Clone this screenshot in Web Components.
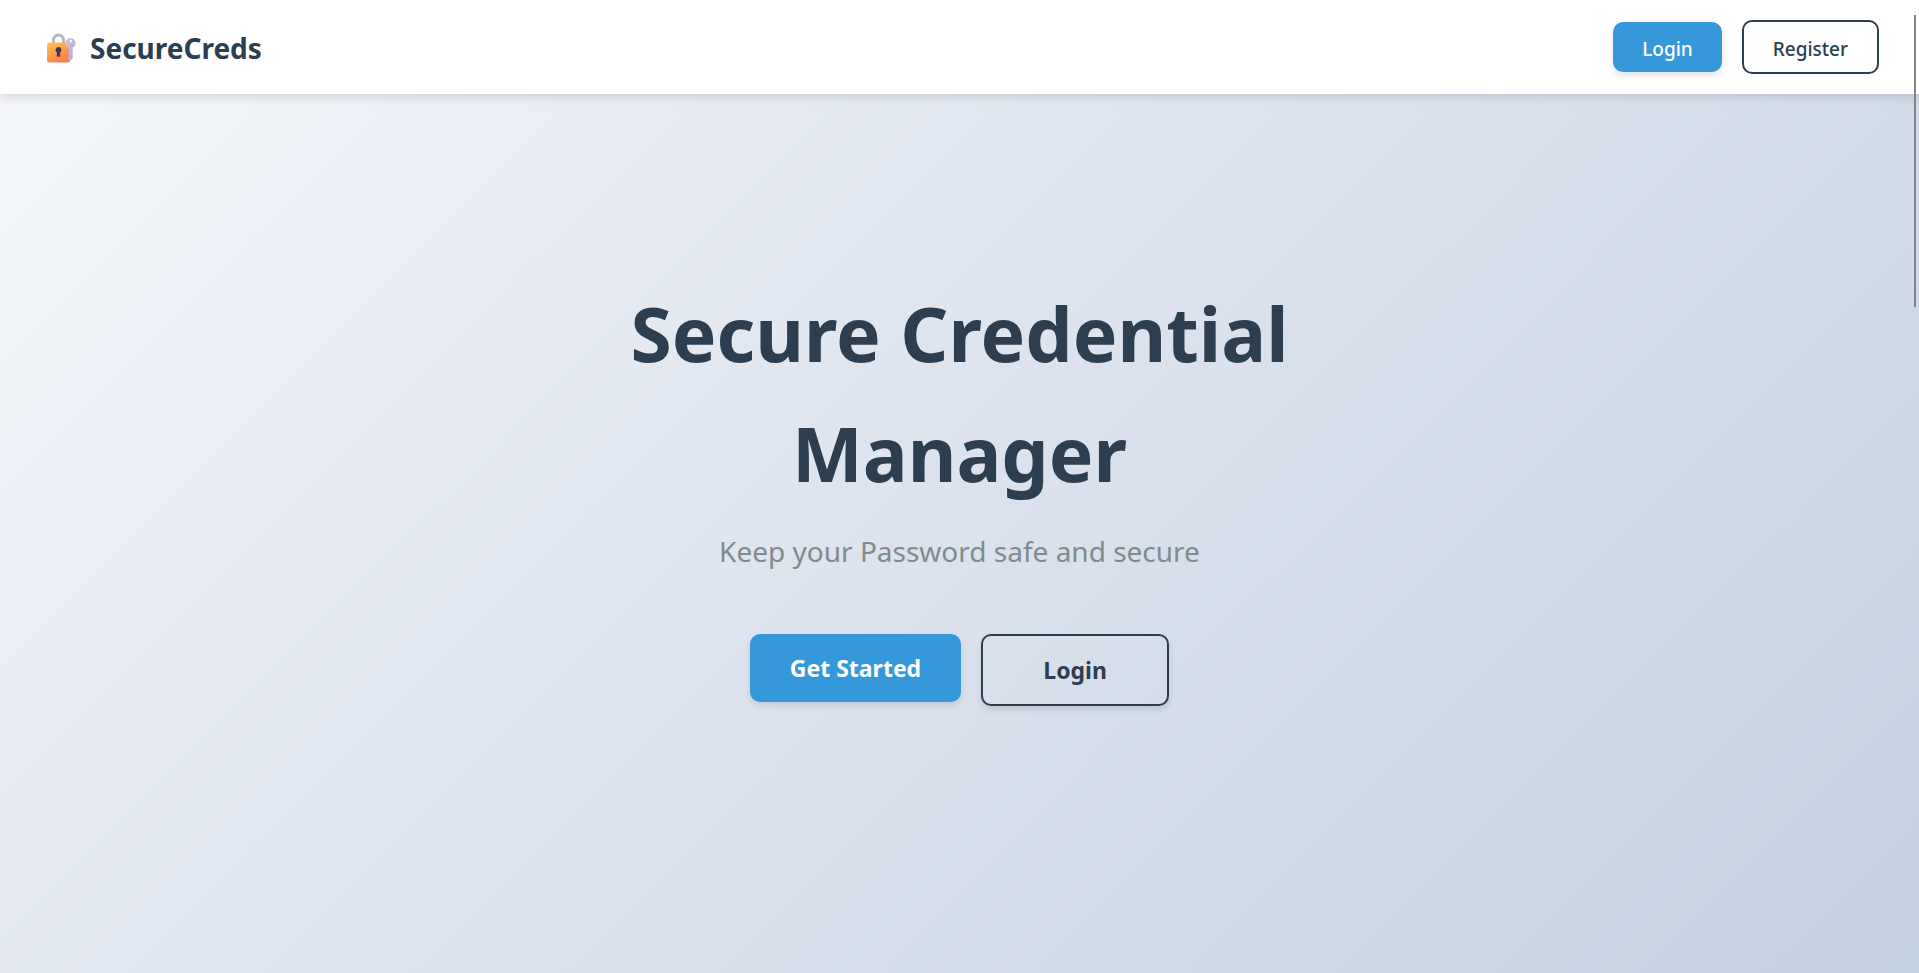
<!DOCTYPE html>
<html lang="en">
<head>
<meta charset="utf-8">
<title>SecureCreds</title>
<meta name="viewport" content="width=device-width, initial-scale=1">
<style>
  :root {
    --navy: #2c3e50;
    --blue: #3498db;
    --grey: #7f8c8d;
  }
  body {
    margin: 0;
    font-family: "Noto Sans", "Open Sans", sans-serif;
    color: var(--navy);
  }
</style>
</head>
<body>
<cred-page>
  <cred-hero>
    <span slot="title">Secure Credential Manager</span>
    <span slot="subtitle">Keep your Password safe and secure</span>
    <cred-button slot="actions" size="large" variant="primary">Get Started</cred-button>
    <cred-button slot="actions" size="large" variant="outline">Login</cred-button>
  </cred-hero>
  <cred-header slot="header">
    <cred-logo slot="brand">SecureCreds</cred-logo>
    <cred-button variant="primary">Login</cred-button>
    <cred-button variant="outline">Register</cred-button>
  </cred-header>
  <cred-thumb slot="thumb"></cred-thumb>
</cred-page>
<script>
const define = (name, html) => {
  const template = document.createElement("template");
  template.innerHTML = html;
  customElements.define(name, class extends HTMLElement {
    constructor() {
      super();
      this.attachShadow({ mode: "open" }).append(template.content.cloneNode(true));
    }
  });
};

define("cred-page", `
  <style>
    :host {
      display: grid;
      position: relative;
      min-height: 100vh;
      background: linear-gradient(135deg, #f5f7fa 0%, #c3cfe2 100%);
    }
    ::slotted(cred-hero) { grid-area: 1 / 1; }
    ::slotted(cred-header) { grid-area: 1 / 1; align-self: start; }
  </style>
  <slot></slot>
  <slot name="header"></slot>
  <slot name="thumb"></slot>`);

define("cred-header", `
  <style>
    :host { display: block; }
    header {
      display: flex;
      align-items: center;
      justify-content: space-between;
      padding: 20px 40px;
      background: #fff;
      box-shadow: 0 2px 10px rgba(0, 0, 0, 0.15);
    }
    nav { display: flex; align-items: center; gap: 20px; }
  </style>
  <header>
    <slot name="brand"></slot>
    <nav><slot></slot></nav>
  </header>`);

define("cred-logo", `
  <style>
    :host { display: block; }
    a {
      display: flex;
      align-items: center;
      gap: 10px;
      padding-top: 2px;
      color: inherit;
      text-decoration: none;
      font-weight: 700;
      font-size: 28px;
      line-height: 42px;
    }
    svg { display: block; flex: none; }
  </style>
  <a href="#">
    <svg width="40" height="32" viewBox="0 0 40 32" aria-hidden="true">
      <defs>
        <linearGradient id="body" x1="0" y1="0" x2="0.5" y2="1">
          <stop offset="0" stop-color="#fcc850"/>
          <stop offset="0.5" stop-color="#fba548"/>
          <stop offset="1" stop-color="#fb7f50"/>
        </linearGradient>
        <linearGradient id="key" x1="0" y1="0" x2="1" y2="1">
          <stop offset="0" stop-color="#d3c4e0"/>
          <stop offset="1" stop-color="#b5a6ca"/>
        </linearGradient>
      </defs>
      <path d="M13.500 12V8a5 5 0 0 1 10 0v4" fill="none" stroke="#b9b3bf" stroke-width="3"/>
      <rect x="7" y="10.500" width="23" height="20" rx="2.500" fill="url(#body)"/>
      <path d="M27 16h3v11q0 3-3 3z" fill="#ef8146" opacity=".55"/>
      <path d="M18.500 15a3 3 0 0 1 1.500 5.600l.3 3.600q-1.800 1.300-3.600 0l.3-3.600A3 3 0 0 1 18.500 15z" fill="#46325f"/>
      <path fill-rule="evenodd" fill="url(#key)" d="M30.300 6a5.100 5.100 0 0 1 2.400 9.600V26.500L30.500 28.600 28.200 27v-2l1.100-1.100-1.100-1.200v-2l1.100-1.200-1.100-1.200V15.600A5.100 5.100 0 0 1 30.300 6zM30.800 7.700a1.300 1.300 0 1 0 .01 0z"/>
    </svg>
    <span><slot></slot></span>
  </a>`);

define("cred-hero", `
  <style>
    :host {
      display: flex;
      flex-direction: column;
      align-items: center;
      justify-content: center;
      text-align: center;
    }
    section { max-width: 800px; }
    h1 { margin: 0 0 16px; padding-top: 6px; font-size: 75px; line-height: 120px; font-weight: 700; }
    p { margin: 0 0 60px; font-size: 28px; line-height: 45px; color: var(--grey); }
    div { display: flex; align-items: flex-start; justify-content: center; gap: 20px; }
  </style>
  <section>
    <h1><slot name="title"></slot></h1>
    <p><slot name="subtitle"></slot></p>
    <div><slot name="actions"></slot></div>
  </section>`);

define("cred-button", `
  <style>
    :host { display: block; }
    button {
      display: block;
      padding: 12px 29px 8px;
      border: 0;
      border-radius: 10px;
      font: 500 19px/30px "Noto Sans", "Open Sans", sans-serif;
      cursor: pointer;
    }
    :host([variant="primary"]) button {
      background: var(--blue);
      color: #fff;
      box-shadow: 0 4px 6px rgba(0, 0, 0, 0.1);
    }
    :host([variant="outline"]) button {
      background: transparent;
      color: var(--navy);
      border: 2px solid var(--navy);
    }
    :host([size="large"]) button {
      min-width: 188px;
      padding: 16px 40px;
      font-weight: 700;
      font-size: 23px;
      line-height: 36px;
      box-shadow: 0 4px 6px rgba(0, 0, 0, 0.1);
    }
  </style>
  <button type="button"><slot></slot></button>`);

define("cred-thumb", `
  <style>
    :host {
      position: absolute;
      top: 15px;
      right: 3px;
      width: 2px;
      height: 30vh;
      background: #858585;
    }
  </style>`);
</script>
</body>
</html>
